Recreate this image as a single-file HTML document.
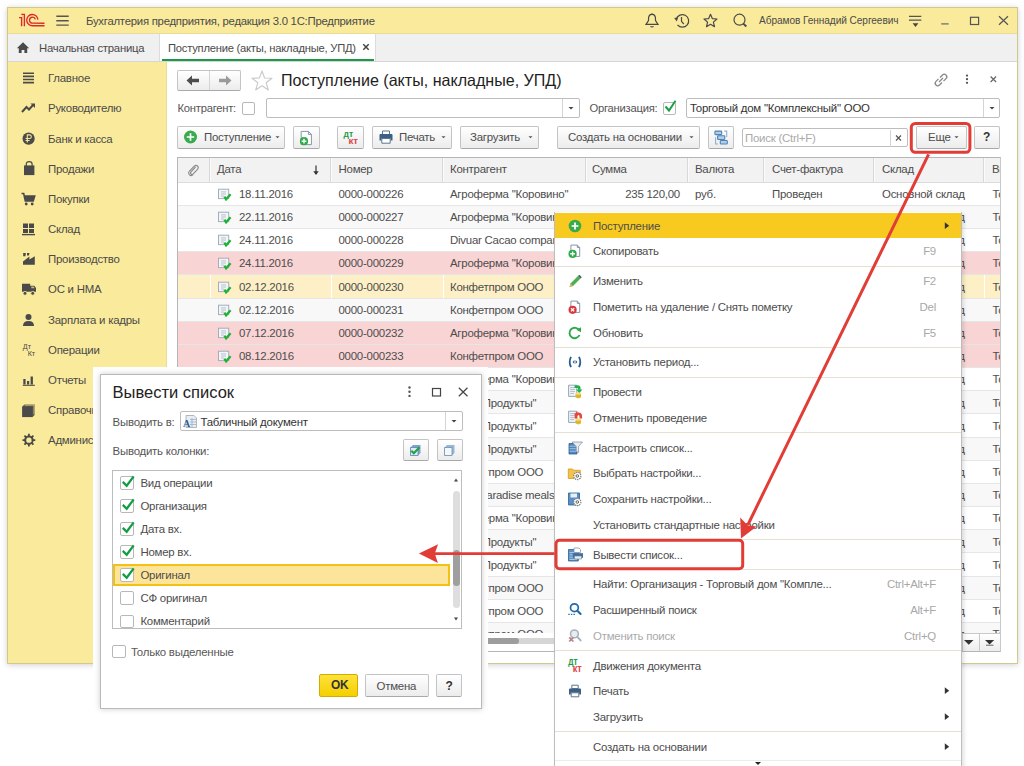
<!DOCTYPE html><html><head><meta charset="utf-8"><style>
html,body{margin:0;padding:0;}
body{width:1024px;height:766px;overflow:hidden;position:relative;background:#fff;font-family:"Liberation Sans", sans-serif;}
div{box-sizing:border-box;}
.btn{position:absolute;box-sizing:border-box;border:1px solid #c4c4c4;border-bottom-color:#a9a9a9;border-radius:2px;background:linear-gradient(#ffffff,#ececec);}
.inp{position:absolute;box-sizing:border-box;border:1px solid #bdbdbd;border-radius:2px;background:#fff;}
.cb{position:absolute;box-sizing:border-box;border:1px solid #b8b8b8;border-radius:2px;background:#fff;}
</style></head><body>
<div style="position:absolute;left:7px;top:7px;width:1011px;height:657px;background:#fff;border:1px solid #d3c88c;box-shadow:0 1px 6px rgba(0,0,0,0.18);"></div>
<div style="position:absolute;left:8px;top:8px;width:1009px;height:26px;background:#faea9b;border-bottom:1px solid #eadc98;"></div>
<svg style="position:absolute;left:0px;top:0px;" width="50" height="35" viewBox="0 0 50 35"><g fill="none" stroke="#dc2a2a" stroke-width="1.35" stroke-linecap="butt">
<path d="M21.3 14.4 H24.4 V26.3"/><path d="M19 17.6 H21.6 V26.3"/>
<path d="M37.9 19.6 A5.6 5.6 0 1 0 32.5 25.7 H44.5"/>
<path d="M35.4 19.4 A3 3 0 1 0 32.5 23.2 H44.5"/>
</g><rect x="22.2" y="15" width="1.6" height="11" fill="#eba27f" opacity="0.6"/></svg>
<svg style="position:absolute;left:55px;top:14px;" width="15" height="13" viewBox="0 0 15 13"><g stroke="#555" stroke-width="1.4"><path d="M1.3 2.3H13.7M1.3 6.7H13.7M1.3 11.1H13.7"/></g></svg>
<div style="position:absolute;left:86px;top:14.0px;height:14px;line-height:14px;font-size:11.34px;letter-spacing:-0.24px;color:#4a4a4a;white-space:nowrap;">Бухгалтерия предприятия, редакция 3.0 1С:Предприятие</div>
<svg style="position:absolute;left:644px;top:12px;" width="16" height="17" viewBox="0 0 16 17"><g fill="none" stroke="#4a4a4a" stroke-width="1.2"><path d="M2 12.3 L4.5 8.5 L4.6 5.4 Q5 2.6 7.5 2.3 L8.5 2.3 Q11 2.6 11.4 5.4 L11.5 8.5 L14 12.3 Z"/></g><path d="M6 14.2 H10 Q9.5 15.6 8 15.6 Q6.5 15.6 6 14.2Z" fill="#4a4a4a"/><path d="M7 2.5 L8 1 L9 2.5Z" fill="#4a4a4a"/></svg>
<svg style="position:absolute;left:673px;top:12px;" width="18" height="18" viewBox="0 0 18 18"><g fill="none" stroke="#4a4a4a" stroke-width="1.2"><path d="M3.3 7.2 A6.3 6.3 0 1 1 4.5 12.9"/><path d="M8.5 5 L8.5 9.3 L10.8 12"/></g><path d="M1.2 6 L5.2 5.3 L3.8 9.5Z" fill="#4a4a4a"/></svg>
<svg style="position:absolute;left:703px;top:13px;" width="16" height="16" viewBox="0 0 16 16"><path d="M7.5 1.3 L9.3 5.6 L14 6 L10.4 9.1 L11.5 13.7 L7.5 11.3 L3.5 13.7 L4.6 9.1 L1 6 L5.7 5.6Z" fill="none" stroke="#4a4a4a" stroke-width="1.2" stroke-linejoin="round"/></svg>
<svg style="position:absolute;left:732px;top:12px;" width="17" height="17" viewBox="0 0 17 17"><circle cx="7.5" cy="7.7" r="5.5" fill="none" stroke="#4a4a4a" stroke-width="1.2"/><path d="M11.3 11.6 L14.3 14.5" stroke="#4a4a4a" stroke-width="2"/></svg>
<div style="position:absolute;left:759px;top:13.7px;height:13px;line-height:13px;font-size:10.1px;color:#4a4a4a;white-space:nowrap;letter-spacing:-0.06px;">Абрамов Геннадий Сергеевич</div>
<svg style="position:absolute;left:907px;top:13px;" width="17" height="16" viewBox="0 0 17 16"><g stroke="#555" stroke-width="1.2"><path d="M2 3.3H14.3M2 7.2H14.3"/></g><path d="M5.6 10.2 L11.4 10.2 L8.5 13.9Z" fill="#444"/></svg>
<svg style="position:absolute;left:938px;top:13px;" width="14" height="14" viewBox="0 0 14 14"><path d="M3.2 10.9 H10.7" stroke="#666" stroke-width="1.2"/></svg>
<svg style="position:absolute;left:967px;top:13px;" width="14" height="14" viewBox="0 0 14 14"><rect x="3.5" y="4.3" width="8.1" height="7.2" fill="none" stroke="#555" stroke-width="1.2"/></svg>
<svg style="position:absolute;left:996px;top:13px;" width="15" height="15" viewBox="0 0 15 15"><path d="M3 3.3 L12 11.8 M12 3.3 L3 11.8" stroke="#555" stroke-width="1.2"/></svg>
<div style="position:absolute;left:8px;top:34px;width:1009px;height:28px;background:#f0f0f0;border-bottom:1px solid #d6d6d6;"></div>
<svg style="position:absolute;left:15px;top:40px;" width="16" height="16" viewBox="0 0 16 16"><path d="M8 2.2 L14.2 8.2 L12.2 8.2 L12.2 13 L9.4 13 L9.4 10 L6.6 10 L6.6 13 L3.8 13 L3.8 8.2 L1.8 8.2Z" fill="#4a4a4a"/></svg>
<div style="position:absolute;left:39px;top:40.5px;height:14px;line-height:14px;font-size:11.34px;letter-spacing:-0.24px;color:#4a4a4a;white-space:nowrap;">Начальная страница</div>
<div style="position:absolute;left:159px;top:34px;width:1px;height:27px;background:#dcdcdc;"></div>
<div style="position:absolute;left:160px;top:34px;width:215px;height:27px;background:#fff;"></div>
<div style="position:absolute;left:375px;top:34px;width:1px;height:27px;background:#dcdcdc;"></div>
<div style="position:absolute;left:161.5px;top:58.5px;width:212px;height:2px;background:#1a9a46;"></div>
<div style="position:absolute;left:168px;top:40.5px;height:14px;line-height:14px;font-size:11.23px;letter-spacing:-0.24px;color:#4a4a4a;white-space:nowrap;">Поступление (акты, накладные, УПД)</div>
<svg style="position:absolute;left:361px;top:42px;" width="10" height="10" viewBox="0 0 10 10"><path d="M2.3 2.3 L7.7 7.7 M7.7 2.3 L2.3 7.7" stroke="#444" stroke-width="1.5"/></svg>
<div style="position:absolute;left:8px;top:62px;width:159px;height:601px;background:#faea9b;border-right:1px solid #e9dc93;"></div>
<div style="position:absolute;left:48px;top:71.3px;height:14px;line-height:14px;font-size:11.44px;letter-spacing:-0.24px;color:#4a4a4a;white-space:nowrap;">Главное</div>
<div style="position:absolute;left:48px;top:101.44999999999999px;height:14px;line-height:14px;font-size:11.44px;letter-spacing:-0.24px;color:#4a4a4a;white-space:nowrap;">Руководителю</div>
<div style="position:absolute;left:48px;top:131.6px;height:14px;line-height:14px;font-size:11.44px;letter-spacing:-0.24px;color:#4a4a4a;white-space:nowrap;">Банк и касса</div>
<div style="position:absolute;left:48px;top:161.75px;height:14px;line-height:14px;font-size:11.44px;letter-spacing:-0.24px;color:#4a4a4a;white-space:nowrap;">Продажи</div>
<div style="position:absolute;left:48px;top:191.89999999999998px;height:14px;line-height:14px;font-size:11.44px;letter-spacing:-0.24px;color:#4a4a4a;white-space:nowrap;">Покупки</div>
<div style="position:absolute;left:48px;top:222.05px;height:14px;line-height:14px;font-size:11.44px;letter-spacing:-0.24px;color:#4a4a4a;white-space:nowrap;">Склад</div>
<div style="position:absolute;left:48px;top:252.2px;height:14px;line-height:14px;font-size:11.44px;letter-spacing:-0.24px;color:#4a4a4a;white-space:nowrap;">Производство</div>
<div style="position:absolute;left:48px;top:282.34999999999997px;height:14px;line-height:14px;font-size:11.44px;letter-spacing:-0.24px;color:#4a4a4a;white-space:nowrap;">ОС и НМА</div>
<div style="position:absolute;left:48px;top:312.5px;height:14px;line-height:14px;font-size:11.44px;letter-spacing:-0.24px;color:#4a4a4a;white-space:nowrap;">Зарплата и кадры</div>
<div style="position:absolute;left:48px;top:342.65px;height:14px;line-height:14px;font-size:11.44px;letter-spacing:-0.24px;color:#4a4a4a;white-space:nowrap;">Операции</div>
<div style="position:absolute;left:48px;top:372.8px;height:14px;line-height:14px;font-size:11.44px;letter-spacing:-0.24px;color:#4a4a4a;white-space:nowrap;">Отчеты</div>
<div style="position:absolute;left:48px;top:402.95px;height:14px;line-height:14px;font-size:11.44px;letter-spacing:-0.24px;color:#4a4a4a;white-space:nowrap;">Справочники</div>
<div style="position:absolute;left:48px;top:433.09999999999997px;height:14px;line-height:14px;font-size:11.44px;letter-spacing:-0.24px;color:#4a4a4a;white-space:nowrap;">Администрирование</div>
<svg style="position:absolute;left:20px;top:70.3px;" width="17" height="16" viewBox="0 0 17 16"><g stroke="#4a4a4a" stroke-width="1.6"><path d="M3 3.3H14M3 6.4H14M3 9.5H14M3 12.6H14"/></g></svg>
<svg style="position:absolute;left:20px;top:100.44999999999999px;" width="17" height="16" viewBox="0 0 17 16"><path d="M2 12 L6.5 7 L9 9.5 L13.5 4.5" fill="none" stroke="#4a4a4a" stroke-width="2"/><path d="M10.5 3.5 L15 3.5 L15 8Z" fill="#4a4a4a"/></svg>
<svg style="position:absolute;left:20px;top:130.6px;" width="17" height="16" viewBox="0 0 17 16"><circle cx="8.6" cy="7.6" r="6.1" fill="#4a4a4a"/><path d="M7.3 11.6 V3.9 H9.4 Q11.3 3.9 11.3 5.7 Q11.3 7.5 9.4 7.5 H5.6 M5.6 9.5 H9.6" fill="none" stroke="#faea9b" stroke-width="1.1"/></svg>
<svg style="position:absolute;left:20px;top:160.75px;" width="17" height="16" viewBox="0 0 17 16"><path d="M4 4.4 H14.4 V14.1 H4Z" fill="#4a4a4a"/><path d="M6.3 5.5 V3 Q6.3 0.7 9.2 0.7 Q12.1 0.7 12.1 3 V5.5" fill="none" stroke="#4a4a4a" stroke-width="1.2"/></svg>
<svg style="position:absolute;left:20px;top:190.89999999999998px;" width="17" height="16" viewBox="0 0 17 16"><path d="M1.5 2.5 H3.7 L5.3 10 H13.2 L14.7 5 H4.5" fill="none" stroke="#4a4a4a" stroke-width="1.6"/><path d="M4.5 5 H14.7 L13.2 10 H5.3Z" fill="#4a4a4a"/><circle cx="6.2" cy="13" r="1.4" fill="#4a4a4a"/><circle cx="12.2" cy="13" r="1.4" fill="#4a4a4a"/></svg>
<svg style="position:absolute;left:20px;top:221.05px;" width="17" height="16" viewBox="0 0 17 16"><path d="M3 2.5 H8 V7 H3Z M9 2.5 H14 V7 H9Z M3 8 H8 V12 H3Z M9 8 H14 V12 H9Z" fill="#4a4a4a"/><path d="M2 13.6 H15" stroke="#4a4a4a" stroke-width="1.4"/></svg>
<svg style="position:absolute;left:20px;top:251.2px;" width="17" height="16" viewBox="0 0 17 16"><path d="M3.2 2 H5.9 L5.4 5.2 H3.2Z M7 2 H9.5 L8.9 4.6 H7Z" fill="#4a4a4a"/><path d="M3 10.6 L9.4 5.6 V8.6 L14.8 5.3 V13.8 H3Z" fill="#4a4a4a"/></svg>
<svg style="position:absolute;left:20px;top:281.34999999999997px;" width="17" height="16" viewBox="0 0 17 16"><path d="M2 2.7 H10.2 V10.7 H2Z M10.2 4.7 H14.3 L16 7 V10.7 H10.2Z" fill="#4a4a4a"/><path d="M11.3 5.6 H13.6 L14.7 7.2 H11.3Z" fill="#faea9b" opacity="0.7"/><circle cx="5" cy="12.3" r="1.9" fill="#4a4a4a" stroke="#faea9b" stroke-width="0.8"/><circle cx="12.7" cy="12.3" r="1.9" fill="#4a4a4a" stroke="#faea9b" stroke-width="0.8"/></svg>
<svg style="position:absolute;left:20px;top:311.5px;" width="17" height="16" viewBox="0 0 17 16"><circle cx="8.5" cy="5" r="3" fill="#4a4a4a"/><path d="M3 14 Q3 9 8.5 9 Q14 9 14 14Z" fill="#4a4a4a"/></svg>
<svg style="position:absolute;left:20px;top:341.65px;" width="17" height="16" viewBox="0 0 17 16"><text x="2.8" y="7.4" font-size="7.2" font-family="Liberation Sans" fill="#4a4a4a">Дт</text><text x="7.7" y="14.2" font-size="7.2" font-family="Liberation Sans" fill="#4a4a4a">Кт</text></svg>
<svg style="position:absolute;left:20px;top:371.8px;" width="17" height="16" viewBox="0 0 17 16"><path d="M3.3 7 H5.6 V12.6 H3.3Z M7 9 H9.2 V12.6 H7Z M10.6 4.5 H12.9 V12.6 H10.6Z" fill="#4a4a4a"/><path d="M2.8 13.3 H14.8" stroke="#4a4a4a" stroke-width="1.1"/></svg>
<svg style="position:absolute;left:20px;top:401.95px;" width="17" height="16" viewBox="0 0 17 16"><path d="M2.3 4.6 L4.5 2.4 H14.7 V12.9 L12.5 15.1 H2.3Z" fill="#5f5b4a"/><path d="M2.3 4.6 H12.5 V15.1 H2.3Z" fill="#4a4a4a"/><path d="M4.8 3.2 H14 V12.4" fill="none" stroke="#faea9b" stroke-width="0.6"/></svg>
<svg style="position:absolute;left:20px;top:432.09999999999997px;" width="17" height="16" viewBox="0 0 17 16"><circle cx="8.9" cy="8.2" r="3.9" fill="none" stroke="#4a4a4a" stroke-width="1.8"/><path d="M8.9 1.8V14.6M2.5 8.2H15.3M4.4 3.7L13.4 12.7M13.4 3.7L4.4 12.7" stroke="#4a4a4a" stroke-width="1.8"/><circle cx="8.9" cy="8.2" r="2.6" fill="#faea9b"/></svg>
<div class="btn" style="left:177px;top:69.5px;width:64px;height:21px;"></div>
<div style="position:absolute;left:209px;top:70.5px;width:1px;height:19px;background:#d4d4d4;"></div>
<svg style="position:absolute;left:185px;top:74px;" width="16" height="13" viewBox="0 0 16 13"><path d="M1.5 6.5 L7 1.5 L7 4.8 L14 4.8 L14 8.2 L7 8.2 L7 11.5Z" fill="#4d4d4d"/></svg>
<svg style="position:absolute;left:217px;top:74px;" width="16" height="13" viewBox="0 0 16 13"><path d="M14.5 6.5 L9 1.5 L9 4.8 L2 4.8 L2 8.2 L9 8.2 L9 11.5Z" fill="#9a9a9a"/></svg>
<svg style="position:absolute;left:250px;top:69px;" width="24" height="23" viewBox="0 0 24 23"><path d="M12 2 L14.6 9 L22 9.2 L16.2 13.8 L18.3 21 L12 16.8 L5.7 21 L7.8 13.8 L2 9.2 L9.4 9Z" fill="none" stroke="#c9c9c9" stroke-width="1.1" stroke-linejoin="round"/></svg>
<div style="position:absolute;left:281px;top:69.5px;height:21px;line-height:21px;font-size:16.07px;color:#1e1e1e;white-space:nowrap;">Поступление (акты, накладные, УПД)</div>
<svg style="position:absolute;left:931px;top:70px;" width="20" height="20" viewBox="0 0 20 20"><g fill="none" stroke="#888" stroke-width="1.3"><path d="M9 7.5 L11.5 5 Q13.3 3.2 15 5 Q16.8 6.8 15 8.6 L12.5 11.1"/><path d="M11 12.5 L8.5 15 Q6.7 16.8 5 15 Q3.2 13.2 5 11.4 L7.5 8.9"/><path d="M8 12 L12 8"/></g></svg>
<svg style="position:absolute;left:963px;top:73px;" width="8" height="14" viewBox="0 0 8 14"><circle cx="4" cy="2.6" r="1.15" fill="#555"/><circle cx="4" cy="6.2" r="1.15" fill="#555"/><circle cx="4" cy="9.8" r="1.15" fill="#555"/></svg>
<svg style="position:absolute;left:987px;top:74px;" width="12" height="12" viewBox="0 0 12 12"><path d="M3.6 2.5 L9.1 8 M9.1 2.5 L3.6 8" stroke="#666" stroke-width="1.2"/></svg>
<div style="position:absolute;left:177.5px;top:101.0px;height:14px;line-height:14px;font-size:11.23px;letter-spacing:-0.24px;color:#555;white-space:nowrap;">Контрагент:</div>
<div class="cb" style="left:241.8px;top:102px;width:13px;height:13px;"></div>
<div class="inp" style="left:265.5px;top:98px;width:314px;height:20px;"></div>
<div style="position:absolute;left:561.5px;top:99px;width:1px;height:18px;background:#d4d4d4;"></div>
<svg style="position:absolute;left:566px;top:104px;" width="10" height="8" viewBox="0 0 10 8"><path d="M2.5 3 L7.5 3 L5 5.5Z" fill="#444"/></svg>
<div style="position:absolute;left:589.5px;top:101.0px;height:14px;line-height:14px;font-size:11.23px;letter-spacing:-0.24px;color:#555;white-space:nowrap;">Организация:</div>
<div class="cb" style="left:663.4px;top:102px;width:13px;height:13px;"></div>
<svg style="position:absolute;left:661px;top:97px;" width="18" height="18" viewBox="0 0 18 18"><path d="M4.5 9.5 L8 13.5 L14.5 3.8" fill="none" stroke="#1c9f45" stroke-width="2"/></svg>
<div class="inp" style="left:686px;top:98px;width:314px;height:20px;"></div>
<div style="position:absolute;left:982.5px;top:99px;width:1px;height:18px;background:#d4d4d4;"></div>
<svg style="position:absolute;left:987px;top:104px;" width="10" height="8" viewBox="0 0 10 8"><path d="M2.5 3 L7.5 3 L5 5.5Z" fill="#444"/></svg>
<div style="position:absolute;left:690px;top:101.0px;height:14px;line-height:14px;font-size:11.44px;letter-spacing:-0.24px;color:#333;white-space:nowrap;">Торговый дом "Комплексный" ООО</div>
<div class="btn" style="left:177px;top:125.6px;width:108px;height:23px;"></div>
<svg style="position:absolute;left:182px;top:127px;" width="18" height="18" viewBox="0 0 18 18"><circle cx="8.5" cy="10" r="6.5" fill="#3aaa4f"/><path d="M8.5 6.3V13.7M4.8 10H12.2" stroke="#fff" stroke-width="1.7"/></svg>
<div style="position:absolute;left:204px;top:130.1px;height:14px;line-height:14px;font-size:11.44px;letter-spacing:-0.24px;color:#4d4d4d;white-space:nowrap;">Поступление</div>
<svg style="position:absolute;left:274px;top:133px;" width="8" height="8" viewBox="0 0 8 8"><path d="M1.5 3.2H5.5L3.5 5.2Z" fill="#555"/></svg>
<div class="btn" style="left:293px;top:125.6px;width:27px;height:23px;"></div>
<svg style="position:absolute;left:297px;top:128px;" width="20" height="19" viewBox="0 0 20 19"><path d="M4.2 3.4 H11.4 L14.4 6.4 V16.6 H4.2Z" fill="#fff" stroke="#8896a6" stroke-width="1"/><path d="M11.4 3.4V6.4H14.4" fill="none" stroke="#8896a6" stroke-width="1"/><circle cx="7" cy="13.2" r="4.1" fill="#2eaa48"/><path d="M7 10.8V15.6M4.6 13.2H9.4" stroke="#fff" stroke-width="1.4"/></svg>
<div class="btn" style="left:337px;top:125.6px;width:27px;height:23px;"></div>
<svg style="position:absolute;left:340px;top:128px;" width="22" height="18" viewBox="0 0 22 18"><text x="3.5" y="9.3" font-size="9" font-weight="bold" font-family="Liberation Sans" fill="#1f9a45" textLength="9.6" lengthAdjust="spacingAndGlyphs">дт</text><text x="8.5" y="15.8" font-size="9" font-weight="bold" font-family="Liberation Sans" fill="#e04545" textLength="9.6" lengthAdjust="spacingAndGlyphs">кт</text></svg>
<div class="btn" style="left:372px;top:125.6px;width:80px;height:23px;"></div>
<svg style="position:absolute;left:377px;top:128px;" width="18" height="18" viewBox="0 0 18 18"><path d="M5.5 3 H12.5 V6.5 H5.5Z" fill="#fff" stroke="#5c7590" stroke-width="1"/><path d="M2.5 7 Q2.5 6 3.5 6 H14.5 Q15.5 6 15.5 7 V12.5 H13.5 V10.5 H4.5 V12.5 H2.5Z" fill="#3d5f85"/><path d="M4.8 10.5 H13.2 V15.2 H4.8Z" fill="#fff" stroke="#5c7590" stroke-width="1"/></svg>
<div style="position:absolute;left:399px;top:130.1px;height:14px;line-height:14px;font-size:11.44px;letter-spacing:-0.24px;color:#4d4d4d;white-space:nowrap;">Печать</div>
<svg style="position:absolute;left:440px;top:133px;" width="8" height="8" viewBox="0 0 8 8"><path d="M1.5 3.2H5.5L3.5 5.2Z" fill="#555"/></svg>
<div class="btn" style="left:460px;top:125.6px;width:79px;height:23px;"></div>
<div style="position:absolute;left:470px;top:130.1px;height:14px;line-height:14px;font-size:11.44px;letter-spacing:-0.24px;color:#4d4d4d;white-space:nowrap;">Загрузить</div>
<svg style="position:absolute;left:527px;top:133px;" width="8" height="8" viewBox="0 0 8 8"><path d="M1.5 3.2H5.5L3.5 5.2Z" fill="#555"/></svg>
<div class="btn" style="left:556.5px;top:125.6px;width:143px;height:23px;"></div>
<div style="position:absolute;left:568px;top:130.1px;height:14px;line-height:14px;font-size:11.44px;letter-spacing:-0.24px;color:#4d4d4d;white-space:nowrap;">Создать на основании</div>
<svg style="position:absolute;left:688px;top:133px;" width="8" height="8" viewBox="0 0 8 8"><path d="M1.5 3.2H5.5L3.5 5.2Z" fill="#555"/></svg>
<div class="btn" style="left:708px;top:125.6px;width:26px;height:23px;"></div>
<svg style="position:absolute;left:708px;top:125px;" width="26" height="22" viewBox="0 0 26 22"><g stroke="#4f83b5" stroke-width="1.1" fill="#b3cde6"><rect x="6.9" y="6.1" width="6.8" height="3.5" rx="0.8"/><rect x="9.6" y="10.7" width="7.2" height="3.8" rx="0.8"/><rect x="12.3" y="15.5" width="7" height="3.5" rx="0.8"/></g><path d="M7.6 12.3 V19 H10 M16.3 6.1 H18.7 V12" fill="none" stroke="#8fb2d3" stroke-width="1.1"/></svg>
<div class="inp" style="left:742px;top:128.4px;width:165.5px;height:19px;"></div>
<div style="position:absolute;left:889.5px;top:129.5px;width:1px;height:17px;background:#d4d4d4;"></div>
<div style="position:absolute;left:745px;top:131.0px;height:14px;line-height:14px;font-size:11.44px;letter-spacing:-0.24px;color:#aaa;white-space:nowrap;">Поиск (Ctrl+F)</div>
<svg style="position:absolute;left:893px;top:133px;" width="12" height="10" viewBox="0 0 12 10"><path d="M3 2.5 L8 7.5 M8 2.5 L3 7.5" stroke="#555" stroke-width="1.2"/></svg>
<div class="btn" style="left:915.5px;top:125.5px;width:51px;height:23.4px;"></div>
<div style="position:absolute;left:928px;top:130.0px;height:14px;line-height:14px;font-size:11.44px;letter-spacing:-0.24px;color:#4d4d4d;white-space:nowrap;">Еще</div>
<svg style="position:absolute;left:953px;top:133px;" width="8" height="8" viewBox="0 0 8 8"><path d="M1.5 3.2H5.5L3.5 5.2Z" fill="#555"/></svg>
<div class="btn" style="left:974px;top:125.5px;width:26px;height:23.4px;"></div>
<div style="position:absolute;left:983px;top:129.0px;height:16px;line-height:16px;font-size:12px;color:#333;white-space:nowrap;font-weight:bold;">?</div>
<div style="position:absolute;left:177.3px;top:157.3px;width:823.7px;height:494.90000000000003px;border:1px solid #b5b5b5;border-right-color:#c8c8c8;background:#fff;overflow:hidden;">
<div style="position:absolute;left:0.00px;top:0.00px;width:900.00px;height:24.40px;background:#f2f2f2;border-bottom:1px solid #dcdcdc;"></div>
<div style="position:absolute;left:30.30px;top:0.00px;width:1.00px;height:23.40px;background:#d8d8d8;box-shadow:1px 0 0 #fbfbfb;"></div>
<div style="position:absolute;left:151.30px;top:0.00px;width:1.00px;height:23.40px;background:#d8d8d8;box-shadow:1px 0 0 #fbfbfb;"></div>
<div style="position:absolute;left:263.30px;top:0.00px;width:1.00px;height:23.40px;background:#d8d8d8;box-shadow:1px 0 0 #fbfbfb;"></div>
<div style="position:absolute;left:406.30px;top:0.00px;width:1.00px;height:23.40px;background:#d8d8d8;box-shadow:1px 0 0 #fbfbfb;"></div>
<div style="position:absolute;left:508.70px;top:0.00px;width:1.00px;height:23.40px;background:#d8d8d8;box-shadow:1px 0 0 #fbfbfb;"></div>
<div style="position:absolute;left:585.10px;top:0.00px;width:1.00px;height:23.40px;background:#d8d8d8;box-shadow:1px 0 0 #fbfbfb;"></div>
<div style="position:absolute;left:695.20px;top:0.00px;width:1.00px;height:23.40px;background:#d8d8d8;box-shadow:1px 0 0 #fbfbfb;"></div>
<div style="position:absolute;left:805.20px;top:0.00px;width:1.00px;height:23.40px;background:#d8d8d8;box-shadow:1px 0 0 #fbfbfb;"></div>
<div style="position:absolute;left:7.70px;top:4.70px;width:14.00px;height:14.00px;"><svg width="14" height="14" viewBox="0 0 14 14" style="position:absolute;left:0;top:0"><path d="M9.5 4 L5 8.8 Q4 10 5 11 Q6 12 7.2 10.8 L11.5 6.3 Q13 4.5 11.5 3 Q10 1.6 8.2 3.2 L3.5 8 Q1.8 10 3.5 11.8 Q5.2 13.4 7.2 11.6" fill="none" stroke="#888" stroke-width="1.1"/></svg></div>
<div style="position:absolute;left:38.70px;top:2.90px;height:16px;line-height:16px;font-size:11.44px;letter-spacing:-0.24px;color:#4d4d4d;white-space:nowrap;">Дата</div>
<div style="position:absolute;left:160.20px;top:2.90px;height:16px;line-height:16px;font-size:11.44px;letter-spacing:-0.24px;color:#4d4d4d;white-space:nowrap;">Номер</div>
<div style="position:absolute;left:271.70px;top:2.90px;height:16px;line-height:16px;font-size:11.44px;letter-spacing:-0.24px;color:#4d4d4d;white-space:nowrap;">Контрагент</div>
<div style="position:absolute;left:413.70px;top:2.90px;height:16px;line-height:16px;font-size:11.44px;letter-spacing:-0.24px;color:#4d4d4d;white-space:nowrap;">Сумма</div>
<div style="position:absolute;left:516.70px;top:2.90px;height:16px;line-height:16px;font-size:11.44px;letter-spacing:-0.24px;color:#4d4d4d;white-space:nowrap;">Валюта</div>
<div style="position:absolute;left:593.70px;top:2.90px;height:16px;line-height:16px;font-size:11.44px;letter-spacing:-0.24px;color:#4d4d4d;white-space:nowrap;">Счет-фактура</div>
<div style="position:absolute;left:703.70px;top:2.90px;height:16px;line-height:16px;font-size:11.44px;letter-spacing:-0.24px;color:#4d4d4d;white-space:nowrap;">Склад</div>
<div style="position:absolute;left:813.70px;top:2.90px;height:16px;line-height:16px;font-size:11.44px;letter-spacing:-0.24px;color:#4d4d4d;white-space:nowrap;">Вид операции</div>
<div style="position:absolute;left:132.70px;top:4.70px;width:10.00px;height:14.00px;"><svg width="10" height="14" viewBox="0 0 10 14" style="position:absolute;left:0;top:0"><path d="M5 2.5V11" stroke="#333" stroke-width="1.2"/><path d="M2.3 8.3 L5 12 L7.7 8.3Z" fill="#333"/></svg></div>
<div style="position:absolute;left:0.00px;top:24.40px;width:900.00px;height:23.17px;background:#ffffff;border-bottom:1px solid #e6e6e6;"></div>
<div style="position:absolute;left:38.70px;top:29.68px;width:16.00px;height:14.00px;"><svg width="16" height="14" viewBox="0 0 16 14" style="position:absolute;left:0;top:0"><rect x="1.5" y="1.2" width="10.2" height="9.4" fill="#f3f5f8" stroke="#a3aebb" stroke-width="1"/><path d="M4 3.9H9M4 6H9M4 8.1H7" fill="none" stroke="#b3bcc7" stroke-width="0.9"/><path d="M7.4 8.6 L9.1 11.3 L13.6 6.2" fill="none" stroke="#1fb137" stroke-width="2.2"/></svg></div>
<div style="position:absolute;left:60.70px;top:27.68px;height:16px;line-height:16px;font-size:11.44px;letter-spacing:-0.24px;color:#4d4d4d;white-space:nowrap;">18.11.2016</div>
<div style="position:absolute;left:160.20px;top:27.68px;height:16px;line-height:16px;font-size:11.44px;letter-spacing:-0.24px;color:#4d4d4d;white-space:nowrap;">0000-000226</div>
<div style="position:absolute;left:271.70px;top:27.68px;height:16px;line-height:16px;font-size:11.44px;letter-spacing:-0.24px;color:#4d4d4d;white-space:nowrap;">Агроферма "Коровино"</div>
<div style="position:absolute;left:407.70px;width:94px;top:27.68px;height:16px;line-height:16px;font-size:11.44px;letter-spacing:-0.24px;color:#4d4d4d;text-align:right;white-space:nowrap;">235 120,00</div>
<div style="position:absolute;left:516.70px;top:27.68px;height:16px;line-height:16px;font-size:11.44px;letter-spacing:-0.24px;color:#4d4d4d;white-space:nowrap;">руб.</div>
<div style="position:absolute;left:593.70px;top:27.68px;height:16px;line-height:16px;font-size:11.44px;letter-spacing:-0.24px;color:#4d4d4d;white-space:nowrap;">Проведен</div>
<div style="position:absolute;left:703.70px;top:27.68px;height:16px;line-height:16px;font-size:11.44px;letter-spacing:-0.24px;color:#4d4d4d;white-space:nowrap;">Основной склад</div>
<div style="position:absolute;left:814.20px;top:27.68px;height:16px;line-height:16px;font-size:11.44px;letter-spacing:-0.24px;color:#4d4d4d;white-space:nowrap;">Товары</div>
<div style="position:absolute;left:0.00px;top:47.57px;width:900.00px;height:23.17px;background:#f8f8f8;border-bottom:1px solid #e6e6e6;"></div>
<div style="position:absolute;left:38.70px;top:52.85px;width:16.00px;height:14.00px;"><svg width="16" height="14" viewBox="0 0 16 14" style="position:absolute;left:0;top:0"><rect x="1.5" y="1.2" width="10.2" height="9.4" fill="#f3f5f8" stroke="#a3aebb" stroke-width="1"/><path d="M4 3.9H9M4 6H9M4 8.1H7" fill="none" stroke="#b3bcc7" stroke-width="0.9"/><path d="M7.4 8.6 L9.1 11.3 L13.6 6.2" fill="none" stroke="#1fb137" stroke-width="2.2"/></svg></div>
<div style="position:absolute;left:60.70px;top:50.85px;height:16px;line-height:16px;font-size:11.44px;letter-spacing:-0.24px;color:#4d4d4d;white-space:nowrap;">22.11.2016</div>
<div style="position:absolute;left:160.20px;top:50.85px;height:16px;line-height:16px;font-size:11.44px;letter-spacing:-0.24px;color:#4d4d4d;white-space:nowrap;">0000-000227</div>
<div style="position:absolute;left:271.70px;top:50.85px;height:16px;line-height:16px;font-size:11.44px;letter-spacing:-0.24px;color:#4d4d4d;white-space:nowrap;">Агроферма "Коровино"</div>
<div style="position:absolute;left:703.70px;top:50.85px;height:16px;line-height:16px;font-size:11.44px;letter-spacing:-0.24px;color:#4d4d4d;white-space:nowrap;">Основной склад</div>
<div style="position:absolute;left:814.20px;top:50.85px;height:16px;line-height:16px;font-size:11.44px;letter-spacing:-0.24px;color:#4d4d4d;white-space:nowrap;">Товары</div>
<div style="position:absolute;left:0.00px;top:70.74px;width:900.00px;height:23.17px;background:#ffffff;border-bottom:1px solid #e6e6e6;"></div>
<div style="position:absolute;left:38.70px;top:76.02px;width:16.00px;height:14.00px;"><svg width="16" height="14" viewBox="0 0 16 14" style="position:absolute;left:0;top:0"><rect x="1.5" y="1.2" width="10.2" height="9.4" fill="#f3f5f8" stroke="#a3aebb" stroke-width="1"/><path d="M4 3.9H9M4 6H9M4 8.1H7" fill="none" stroke="#b3bcc7" stroke-width="0.9"/><path d="M7.4 8.6 L9.1 11.3 L13.6 6.2" fill="none" stroke="#1fb137" stroke-width="2.2"/></svg></div>
<div style="position:absolute;left:60.70px;top:74.02px;height:16px;line-height:16px;font-size:11.44px;letter-spacing:-0.24px;color:#4d4d4d;white-space:nowrap;">24.11.2016</div>
<div style="position:absolute;left:160.20px;top:74.02px;height:16px;line-height:16px;font-size:11.44px;letter-spacing:-0.24px;color:#4d4d4d;white-space:nowrap;">0000-000228</div>
<div style="position:absolute;left:271.70px;top:74.02px;height:16px;line-height:16px;font-size:11.44px;letter-spacing:-0.24px;color:#4d4d4d;white-space:nowrap;">Divuar Cacao company</div>
<div style="position:absolute;left:703.70px;top:74.02px;height:16px;line-height:16px;font-size:11.44px;letter-spacing:-0.24px;color:#4d4d4d;white-space:nowrap;">Основной склад</div>
<div style="position:absolute;left:814.20px;top:74.02px;height:16px;line-height:16px;font-size:11.44px;letter-spacing:-0.24px;color:#4d4d4d;white-space:nowrap;">Товары</div>
<div style="position:absolute;left:0.00px;top:93.91px;width:900.00px;height:23.17px;background:#f9d4d4;border-bottom:1px solid #e6e6e6;"></div>
<div style="position:absolute;left:38.70px;top:99.19px;width:16.00px;height:14.00px;"><svg width="16" height="14" viewBox="0 0 16 14" style="position:absolute;left:0;top:0"><rect x="1.5" y="1.2" width="10.2" height="9.4" fill="#f3f5f8" stroke="#a3aebb" stroke-width="1"/><path d="M4 3.9H9M4 6H9M4 8.1H7" fill="none" stroke="#b3bcc7" stroke-width="0.9"/><path d="M7.4 8.6 L9.1 11.3 L13.6 6.2" fill="none" stroke="#1fb137" stroke-width="2.2"/></svg></div>
<div style="position:absolute;left:60.70px;top:97.19px;height:16px;line-height:16px;font-size:11.44px;letter-spacing:-0.24px;color:#4d4d4d;white-space:nowrap;">24.11.2016</div>
<div style="position:absolute;left:160.20px;top:97.19px;height:16px;line-height:16px;font-size:11.44px;letter-spacing:-0.24px;color:#4d4d4d;white-space:nowrap;">0000-000229</div>
<div style="position:absolute;left:271.70px;top:97.19px;height:16px;line-height:16px;font-size:11.44px;letter-spacing:-0.24px;color:#4d4d4d;white-space:nowrap;">Агроферма "Коровино"</div>
<div style="position:absolute;left:703.70px;top:97.19px;height:16px;line-height:16px;font-size:11.44px;letter-spacing:-0.24px;color:#4d4d4d;white-space:nowrap;">Основной склад</div>
<div style="position:absolute;left:814.20px;top:97.19px;height:16px;line-height:16px;font-size:11.44px;letter-spacing:-0.24px;color:#4d4d4d;white-space:nowrap;">Товары</div>
<div style="position:absolute;left:0.00px;top:117.08px;width:900.00px;height:23.17px;background:#fdf0c6;border-bottom:1px solid #e6e6e6;"></div>
<div style="position:absolute;left:31.30px;top:117.08px;width:1.00px;height:22.17px;background:#fff;"></div>
<div style="position:absolute;left:152.30px;top:117.08px;width:1.00px;height:22.17px;background:#fff;"></div>
<div style="position:absolute;left:264.30px;top:117.08px;width:1.00px;height:22.17px;background:#fff;"></div>
<div style="position:absolute;left:407.30px;top:117.08px;width:1.00px;height:22.17px;background:#fff;"></div>
<div style="position:absolute;left:509.70px;top:117.08px;width:1.00px;height:22.17px;background:#fff;"></div>
<div style="position:absolute;left:586.10px;top:117.08px;width:1.00px;height:22.17px;background:#fff;"></div>
<div style="position:absolute;left:696.20px;top:117.08px;width:1.00px;height:22.17px;background:#fff;"></div>
<div style="position:absolute;left:806.20px;top:117.08px;width:1.00px;height:22.17px;background:#fff;"></div>
<div style="position:absolute;left:38.70px;top:122.36px;width:16.00px;height:14.00px;"><svg width="16" height="14" viewBox="0 0 16 14" style="position:absolute;left:0;top:0"><rect x="1.5" y="1.2" width="10.2" height="9.4" fill="#f3f5f8" stroke="#a3aebb" stroke-width="1"/><path d="M4 3.9H9M4 6H9M4 8.1H7" fill="none" stroke="#b3bcc7" stroke-width="0.9"/><path d="M7.4 8.6 L9.1 11.3 L13.6 6.2" fill="none" stroke="#1fb137" stroke-width="2.2"/></svg></div>
<div style="position:absolute;left:60.70px;top:120.36px;height:16px;line-height:16px;font-size:11.44px;letter-spacing:-0.24px;color:#4d4d4d;white-space:nowrap;">02.12.2016</div>
<div style="position:absolute;left:160.20px;top:120.36px;height:16px;line-height:16px;font-size:11.44px;letter-spacing:-0.24px;color:#4d4d4d;white-space:nowrap;">0000-000230</div>
<div style="position:absolute;left:271.70px;top:120.36px;height:16px;line-height:16px;font-size:11.44px;letter-spacing:-0.24px;color:#4d4d4d;white-space:nowrap;">Конфетпром ООО</div>
<div style="position:absolute;left:703.70px;top:120.36px;height:16px;line-height:16px;font-size:11.44px;letter-spacing:-0.24px;color:#4d4d4d;white-space:nowrap;">Основной склад</div>
<div style="position:absolute;left:814.20px;top:120.36px;height:16px;line-height:16px;font-size:11.44px;letter-spacing:-0.24px;color:#4d4d4d;white-space:nowrap;">Товары</div>
<div style="position:absolute;left:0.00px;top:140.25px;width:900.00px;height:23.17px;background:#f8f8f8;border-bottom:1px solid #e6e6e6;"></div>
<div style="position:absolute;left:38.70px;top:145.53px;width:16.00px;height:14.00px;"><svg width="16" height="14" viewBox="0 0 16 14" style="position:absolute;left:0;top:0"><rect x="1.5" y="1.2" width="10.2" height="9.4" fill="#f3f5f8" stroke="#a3aebb" stroke-width="1"/><path d="M4 3.9H9M4 6H9M4 8.1H7" fill="none" stroke="#b3bcc7" stroke-width="0.9"/><path d="M7.4 8.6 L9.1 11.3 L13.6 6.2" fill="none" stroke="#1fb137" stroke-width="2.2"/></svg></div>
<div style="position:absolute;left:60.70px;top:143.53px;height:16px;line-height:16px;font-size:11.44px;letter-spacing:-0.24px;color:#4d4d4d;white-space:nowrap;">02.12.2016</div>
<div style="position:absolute;left:160.20px;top:143.53px;height:16px;line-height:16px;font-size:11.44px;letter-spacing:-0.24px;color:#4d4d4d;white-space:nowrap;">0000-000231</div>
<div style="position:absolute;left:271.70px;top:143.53px;height:16px;line-height:16px;font-size:11.44px;letter-spacing:-0.24px;color:#4d4d4d;white-space:nowrap;">Конфетпром ООО</div>
<div style="position:absolute;left:703.70px;top:143.53px;height:16px;line-height:16px;font-size:11.44px;letter-spacing:-0.24px;color:#4d4d4d;white-space:nowrap;">Основной склад</div>
<div style="position:absolute;left:814.20px;top:143.53px;height:16px;line-height:16px;font-size:11.44px;letter-spacing:-0.24px;color:#4d4d4d;white-space:nowrap;">Товары</div>
<div style="position:absolute;left:0.00px;top:163.42px;width:900.00px;height:23.17px;background:#f9d4d4;border-bottom:1px solid #e6e6e6;"></div>
<div style="position:absolute;left:38.70px;top:168.70px;width:16.00px;height:14.00px;"><svg width="16" height="14" viewBox="0 0 16 14" style="position:absolute;left:0;top:0"><rect x="1.5" y="1.2" width="10.2" height="9.4" fill="#f3f5f8" stroke="#a3aebb" stroke-width="1"/><path d="M4 3.9H9M4 6H9M4 8.1H7" fill="none" stroke="#b3bcc7" stroke-width="0.9"/><path d="M7.4 8.6 L9.1 11.3 L13.6 6.2" fill="none" stroke="#1fb137" stroke-width="2.2"/></svg></div>
<div style="position:absolute;left:60.70px;top:166.70px;height:16px;line-height:16px;font-size:11.44px;letter-spacing:-0.24px;color:#4d4d4d;white-space:nowrap;">07.12.2016</div>
<div style="position:absolute;left:160.20px;top:166.70px;height:16px;line-height:16px;font-size:11.44px;letter-spacing:-0.24px;color:#4d4d4d;white-space:nowrap;">0000-000232</div>
<div style="position:absolute;left:271.70px;top:166.70px;height:16px;line-height:16px;font-size:11.44px;letter-spacing:-0.24px;color:#4d4d4d;white-space:nowrap;">Агроферма "Коровино"</div>
<div style="position:absolute;left:703.70px;top:166.70px;height:16px;line-height:16px;font-size:11.44px;letter-spacing:-0.24px;color:#4d4d4d;white-space:nowrap;">Основной склад</div>
<div style="position:absolute;left:814.20px;top:166.70px;height:16px;line-height:16px;font-size:11.44px;letter-spacing:-0.24px;color:#4d4d4d;white-space:nowrap;">Товары</div>
<div style="position:absolute;left:0.00px;top:186.59px;width:900.00px;height:23.17px;background:#f9d4d4;border-bottom:1px solid #e6e6e6;"></div>
<div style="position:absolute;left:38.70px;top:191.87px;width:16.00px;height:14.00px;"><svg width="16" height="14" viewBox="0 0 16 14" style="position:absolute;left:0;top:0"><rect x="1.5" y="1.2" width="10.2" height="9.4" fill="#f3f5f8" stroke="#a3aebb" stroke-width="1"/><path d="M4 3.9H9M4 6H9M4 8.1H7" fill="none" stroke="#b3bcc7" stroke-width="0.9"/><path d="M7.4 8.6 L9.1 11.3 L13.6 6.2" fill="none" stroke="#1fb137" stroke-width="2.2"/></svg></div>
<div style="position:absolute;left:60.70px;top:189.87px;height:16px;line-height:16px;font-size:11.44px;letter-spacing:-0.24px;color:#4d4d4d;white-space:nowrap;">08.12.2016</div>
<div style="position:absolute;left:160.20px;top:189.87px;height:16px;line-height:16px;font-size:11.44px;letter-spacing:-0.24px;color:#4d4d4d;white-space:nowrap;">0000-000233</div>
<div style="position:absolute;left:271.70px;top:189.87px;height:16px;line-height:16px;font-size:11.44px;letter-spacing:-0.24px;color:#4d4d4d;white-space:nowrap;">Конфетпром ООО</div>
<div style="position:absolute;left:703.70px;top:189.87px;height:16px;line-height:16px;font-size:11.44px;letter-spacing:-0.24px;color:#4d4d4d;white-space:nowrap;">Основной склад</div>
<div style="position:absolute;left:814.20px;top:189.87px;height:16px;line-height:16px;font-size:11.44px;letter-spacing:-0.24px;color:#4d4d4d;white-space:nowrap;">Товары</div>
<div style="position:absolute;left:0.00px;top:209.76px;width:900.00px;height:23.17px;background:#ffffff;border-bottom:1px solid #e6e6e6;"></div>
<div style="position:absolute;left:271.70px;top:213.04px;height:16px;line-height:16px;font-size:11.44px;letter-spacing:-0.24px;color:#4d4d4d;white-space:nowrap;">Агроферма "Коровино"</div>
<div style="position:absolute;left:703.70px;top:213.04px;height:16px;line-height:16px;font-size:11.44px;letter-spacing:-0.24px;color:#4d4d4d;white-space:nowrap;">Основной склад</div>
<div style="position:absolute;left:814.20px;top:213.04px;height:16px;line-height:16px;font-size:11.44px;letter-spacing:-0.24px;color:#4d4d4d;white-space:nowrap;">Товары</div>
<div style="position:absolute;left:0.00px;top:232.93px;width:900.00px;height:23.17px;background:#f8f8f8;border-bottom:1px solid #e6e6e6;"></div>
<div style="position:absolute;left:271.70px;top:236.21px;height:16px;line-height:16px;font-size:11.44px;letter-spacing:-0.24px;color:#4d4d4d;white-space:nowrap;">ООО "Продукты"</div>
<div style="position:absolute;left:703.70px;top:236.21px;height:16px;line-height:16px;font-size:11.44px;letter-spacing:-0.24px;color:#4d4d4d;white-space:nowrap;">Основной склад</div>
<div style="position:absolute;left:814.20px;top:236.21px;height:16px;line-height:16px;font-size:11.44px;letter-spacing:-0.24px;color:#4d4d4d;white-space:nowrap;">Товары</div>
<div style="position:absolute;left:0.00px;top:256.10px;width:900.00px;height:23.17px;background:#ffffff;border-bottom:1px solid #e6e6e6;"></div>
<div style="position:absolute;left:271.70px;top:259.38px;height:16px;line-height:16px;font-size:11.44px;letter-spacing:-0.24px;color:#4d4d4d;white-space:nowrap;">ООО "Продукты"</div>
<div style="position:absolute;left:703.70px;top:259.38px;height:16px;line-height:16px;font-size:11.44px;letter-spacing:-0.24px;color:#4d4d4d;white-space:nowrap;">Основной склад</div>
<div style="position:absolute;left:814.20px;top:259.38px;height:16px;line-height:16px;font-size:11.44px;letter-spacing:-0.24px;color:#4d4d4d;white-space:nowrap;">Товары</div>
<div style="position:absolute;left:0.00px;top:279.27px;width:900.00px;height:23.17px;background:#f8f8f8;border-bottom:1px solid #e6e6e6;"></div>
<div style="position:absolute;left:271.70px;top:282.55px;height:16px;line-height:16px;font-size:11.44px;letter-spacing:-0.24px;color:#4d4d4d;white-space:nowrap;">ООО "Продукты"</div>
<div style="position:absolute;left:703.70px;top:282.55px;height:16px;line-height:16px;font-size:11.44px;letter-spacing:-0.24px;color:#4d4d4d;white-space:nowrap;">Основной склад</div>
<div style="position:absolute;left:814.20px;top:282.55px;height:16px;line-height:16px;font-size:11.44px;letter-spacing:-0.24px;color:#4d4d4d;white-space:nowrap;">Товары</div>
<div style="position:absolute;left:0.00px;top:302.44px;width:900.00px;height:23.17px;background:#ffffff;border-bottom:1px solid #e6e6e6;"></div>
<div style="position:absolute;left:271.70px;top:305.72px;height:16px;line-height:16px;font-size:11.44px;letter-spacing:-0.24px;color:#4d4d4d;white-space:nowrap;">Конфетпром ООО</div>
<div style="position:absolute;left:703.70px;top:305.72px;height:16px;line-height:16px;font-size:11.44px;letter-spacing:-0.24px;color:#4d4d4d;white-space:nowrap;">Основной склад</div>
<div style="position:absolute;left:814.20px;top:305.72px;height:16px;line-height:16px;font-size:11.44px;letter-spacing:-0.24px;color:#4d4d4d;white-space:nowrap;">Товары</div>
<div style="position:absolute;left:0.00px;top:325.61px;width:900.00px;height:23.17px;background:#f8f8f8;border-bottom:1px solid #e6e6e6;"></div>
<div style="position:absolute;left:271.70px;top:328.89px;height:16px;line-height:16px;font-size:11.44px;letter-spacing:-0.24px;color:#4d4d4d;white-space:nowrap;">ООО Paradise meals</div>
<div style="position:absolute;left:703.70px;top:328.89px;height:16px;line-height:16px;font-size:11.44px;letter-spacing:-0.24px;color:#4d4d4d;white-space:nowrap;">Основной склад</div>
<div style="position:absolute;left:814.20px;top:328.89px;height:16px;line-height:16px;font-size:11.44px;letter-spacing:-0.24px;color:#4d4d4d;white-space:nowrap;">Товары</div>
<div style="position:absolute;left:0.00px;top:348.78px;width:900.00px;height:23.17px;background:#ffffff;border-bottom:1px solid #e6e6e6;"></div>
<div style="position:absolute;left:271.70px;top:352.06px;height:16px;line-height:16px;font-size:11.44px;letter-spacing:-0.24px;color:#4d4d4d;white-space:nowrap;">Агроферма "Коровино"</div>
<div style="position:absolute;left:703.70px;top:352.06px;height:16px;line-height:16px;font-size:11.44px;letter-spacing:-0.24px;color:#4d4d4d;white-space:nowrap;">Основной склад</div>
<div style="position:absolute;left:814.20px;top:352.06px;height:16px;line-height:16px;font-size:11.44px;letter-spacing:-0.24px;color:#4d4d4d;white-space:nowrap;">Товары</div>
<div style="position:absolute;left:0.00px;top:371.95px;width:900.00px;height:23.17px;background:#f8f8f8;border-bottom:1px solid #e6e6e6;"></div>
<div style="position:absolute;left:271.70px;top:375.24px;height:16px;line-height:16px;font-size:11.44px;letter-spacing:-0.24px;color:#4d4d4d;white-space:nowrap;">ООО "Продукты"</div>
<div style="position:absolute;left:703.70px;top:375.24px;height:16px;line-height:16px;font-size:11.44px;letter-spacing:-0.24px;color:#4d4d4d;white-space:nowrap;">Основной склад</div>
<div style="position:absolute;left:814.20px;top:375.24px;height:16px;line-height:16px;font-size:11.44px;letter-spacing:-0.24px;color:#4d4d4d;white-space:nowrap;">Товары</div>
<div style="position:absolute;left:0.00px;top:395.12px;width:900.00px;height:23.17px;background:#ffffff;border-bottom:1px solid #e6e6e6;"></div>
<div style="position:absolute;left:271.70px;top:398.41px;height:16px;line-height:16px;font-size:11.44px;letter-spacing:-0.24px;color:#4d4d4d;white-space:nowrap;">ООО "Продукты"</div>
<div style="position:absolute;left:703.70px;top:398.41px;height:16px;line-height:16px;font-size:11.44px;letter-spacing:-0.24px;color:#4d4d4d;white-space:nowrap;">Основной склад</div>
<div style="position:absolute;left:814.20px;top:398.41px;height:16px;line-height:16px;font-size:11.44px;letter-spacing:-0.24px;color:#4d4d4d;white-space:nowrap;">Товары</div>
<div style="position:absolute;left:0.00px;top:418.29px;width:900.00px;height:23.17px;background:#f8f8f8;border-bottom:1px solid #e6e6e6;"></div>
<div style="position:absolute;left:271.70px;top:421.58px;height:16px;line-height:16px;font-size:11.44px;letter-spacing:-0.24px;color:#4d4d4d;white-space:nowrap;">Конфетпром ООО</div>
<div style="position:absolute;left:703.70px;top:421.58px;height:16px;line-height:16px;font-size:11.44px;letter-spacing:-0.24px;color:#4d4d4d;white-space:nowrap;">Основной склад</div>
<div style="position:absolute;left:814.20px;top:421.58px;height:16px;line-height:16px;font-size:11.44px;letter-spacing:-0.24px;color:#4d4d4d;white-space:nowrap;">Товары</div>
<div style="position:absolute;left:0.00px;top:441.46px;width:900.00px;height:23.17px;background:#ffffff;border-bottom:1px solid #e6e6e6;"></div>
<div style="position:absolute;left:271.70px;top:444.75px;height:16px;line-height:16px;font-size:11.44px;letter-spacing:-0.24px;color:#4d4d4d;white-space:nowrap;">Конфетпром ООО</div>
<div style="position:absolute;left:703.70px;top:444.75px;height:16px;line-height:16px;font-size:11.44px;letter-spacing:-0.24px;color:#4d4d4d;white-space:nowrap;">Основной склад</div>
<div style="position:absolute;left:814.20px;top:444.75px;height:16px;line-height:16px;font-size:11.44px;letter-spacing:-0.24px;color:#4d4d4d;white-space:nowrap;">Товары</div>
<div style="position:absolute;left:0.00px;top:464.63px;width:900.00px;height:23.17px;background:#f8f8f8;border-bottom:1px solid #e6e6e6;"></div>
<div style="position:absolute;left:271.70px;top:467.92px;height:16px;line-height:16px;font-size:11.44px;letter-spacing:-0.24px;color:#4d4d4d;white-space:nowrap;">Конфетпром ООО</div>
<div style="position:absolute;left:703.70px;top:467.92px;height:16px;line-height:16px;font-size:11.44px;letter-spacing:-0.24px;color:#4d4d4d;white-space:nowrap;">Основной склад</div>
<div style="position:absolute;left:814.20px;top:467.92px;height:16px;line-height:16px;font-size:11.44px;letter-spacing:-0.24px;color:#4d4d4d;white-space:nowrap;">Товары</div>
<div style="position:absolute;left:0.00px;top:474.30px;width:900.00px;height:20.00px;background:#fff;"></div>
<div style="position:absolute;left:2.00px;top:479.40px;width:780.00px;height:6.70px;background:#d6d6d6;border-radius:3px;"></div>
<div style="position:absolute;left:2.00px;top:479.40px;width:339.00px;height:6.70px;background:#9d9d9d;border-radius:3px;"></div>
<div style="position:absolute;left:783.40px;top:474.60px;width:39.30px;height:19.00px;background:linear-gradient(#fff,#ececec);border-left:1px solid #c8c8c8;border-top:1px solid #c8c8c8;"></div>
<div style="position:absolute;left:801.00px;top:474.70px;width:1.00px;height:18.00px;background:#c8c8c8;"></div>
<div style="position:absolute;left:782.70px;top:477.70px;width:16.00px;height:12.00px;"><svg width="16" height="12" viewBox="0 0 16 12" style="position:absolute;left:0;top:0"><path d="M3 4H12.5L7.75 8.8Z" fill="#333"/></svg></div>
<div style="position:absolute;left:802.70px;top:477.70px;width:18.00px;height:12.00px;"><svg width="18" height="12" viewBox="0 0 18 12" style="position:absolute;left:0;top:0"><path d="M4 4H13.2L8.6 8.5Z" fill="#333"/><path d="M5 9.2H12.5" stroke="#666" stroke-width="1"/></svg></div>
</div>
<div style="position:absolute;left:553.75px;top:212.2px;width:407.85px;height:553.8px;background:#fff;border-left:1px solid #bdbdbd;border-right:1px solid #bdbdbd;box-shadow:2px 2px 4px rgba(0,0,0,0.12);overflow:hidden;">
<div style="position:absolute;left:0.00px;top:0.50px;width:420.00px;height:25.75px;background:#f8ca1f;"></div>
<div style="position:absolute;left:10.95px;top:4.38px;width:18.00px;height:18.00px;"><svg width="18" height="18" viewBox="0 0 18 18" style="position:absolute;left:0;top:0"><circle cx="9" cy="9" r="6.3" fill="#3aaa4f"/><path d="M9 5.6V12.4M5.6 9H12.4" stroke="#fff" stroke-width="1.7"/></svg></div>
<div style="position:absolute;left:38.25px;top:5.38px;height:16px;line-height:16px;font-size:11.44px;letter-spacing:-0.24px;color:#4d4d4d;white-space:nowrap;">Поступление</div>
<div style="position:absolute;left:382.85px;top:4.38px;width:18.00px;height:18.00px;"><svg width="18" height="18" viewBox="0 0 18 18" style="position:absolute;left:0;top:0"><path d="M6.8 5.3 L11.2 8.7 L6.8 12.1Z" fill="#333"/></svg></div>
<div style="position:absolute;left:10.95px;top:30.12px;width:18.00px;height:18.00px;"><svg width="18" height="18" viewBox="0 0 18 18" style="position:absolute;left:0;top:0"><path d="M4.9 3.1 H11.3 L13.7 5.5 V14.4 H4.9Z" fill="#fff" stroke="#8896a6" stroke-width="1"/><path d="M11.3 3.1V5.5H13.7" fill="none" stroke="#8896a6" stroke-width="1"/><circle cx="6.6" cy="11.8" r="4.1" fill="#2eaa48"/><path d="M6.6 9.4V14.2M4.2 11.8H9" stroke="#fff" stroke-width="1.4"/></svg></div>
<div style="position:absolute;left:38.25px;top:31.12px;height:16px;line-height:16px;font-size:11.44px;letter-spacing:-0.24px;color:#4d4d4d;white-space:nowrap;">Скопировать</div>
<div style="position:absolute;left:145.25px;width:236.00px;top:31.12px;height:16px;line-height:16px;font-size:11.44px;letter-spacing:-0.24px;color:#a8a8a8;text-align:right;white-space:nowrap;">F9</div>
<div style="position:absolute;left:0.00px;top:53.50px;width:420.00px;height:1.00px;background:#e5e0d2;"></div>
<div style="position:absolute;left:10.95px;top:59.88px;width:18.00px;height:18.00px;"><svg width="18" height="18" viewBox="0 0 18 18" style="position:absolute;left:0;top:0"><path d="M3.5 15 L4.5 11.5 L12 4 L14.5 6.5 L7 14Z" fill="#4caf50"/><path d="M12 4 L13.3 2.7 L15.8 5.2 L14.5 6.5Z" fill="#455a64"/><path d="M3.5 15 L4.5 11.5 L7 14Z" fill="#e5b06a"/></svg></div>
<div style="position:absolute;left:38.25px;top:60.88px;height:16px;line-height:16px;font-size:11.44px;letter-spacing:-0.24px;color:#4d4d4d;white-space:nowrap;">Изменить</div>
<div style="position:absolute;left:145.25px;width:236.00px;top:60.88px;height:16px;line-height:16px;font-size:11.44px;letter-spacing:-0.24px;color:#a8a8a8;text-align:right;white-space:nowrap;">F2</div>
<div style="position:absolute;left:10.95px;top:85.62px;width:18.00px;height:18.00px;"><svg width="18" height="18" viewBox="0 0 18 18" style="position:absolute;left:0;top:0"><path d="M4.9 3.1 H11.3 L13.7 5.5 V14.4 H4.9Z" fill="#fff" stroke="#8896a6" stroke-width="1"/><path d="M11.3 3.1V5.5H13.7" fill="none" stroke="#8896a6" stroke-width="1"/><circle cx="6.6" cy="11.8" r="4.1" fill="#d9363e"/><path d="M5 10.2L8.2 13.4M8.2 10.2L5 13.4" stroke="#fff" stroke-width="1.3"/></svg></div>
<div style="position:absolute;left:38.25px;top:86.62px;height:16px;line-height:16px;font-size:11.44px;letter-spacing:-0.24px;color:#4d4d4d;white-space:nowrap;">Пометить на удаление / Снять пометку</div>
<div style="position:absolute;left:145.25px;width:236.00px;top:86.62px;height:16px;line-height:16px;font-size:11.44px;letter-spacing:-0.24px;color:#a8a8a8;text-align:right;white-space:nowrap;">Del</div>
<div style="position:absolute;left:10.95px;top:111.38px;width:18.00px;height:18.00px;"><svg width="18" height="18" viewBox="0 0 18 18" style="position:absolute;left:0;top:0"><path d="M13.3 6.5 A5.2 5.2 0 1 0 13.5 11" fill="none" stroke="#2ea84a" stroke-width="1.9"/><path d="M10.5 5.8 L15 3.2 L15 8.3Z" fill="#2ea84a"/></svg></div>
<div style="position:absolute;left:38.25px;top:112.38px;height:16px;line-height:16px;font-size:11.44px;letter-spacing:-0.24px;color:#4d4d4d;white-space:nowrap;">Обновить</div>
<div style="position:absolute;left:145.25px;width:236.00px;top:112.38px;height:16px;line-height:16px;font-size:11.44px;letter-spacing:-0.24px;color:#a8a8a8;text-align:right;white-space:nowrap;">F5</div>
<div style="position:absolute;left:0.00px;top:134.75px;width:420.00px;height:1.00px;background:#e5e0d2;"></div>
<div style="position:absolute;left:10.95px;top:141.12px;width:18.00px;height:18.00px;"><svg width="18" height="18" viewBox="0 0 18 18" style="position:absolute;left:0;top:0"><path d="M5 3.8 Q2.4 9 5 14.2 M13 3.8 Q15.6 9 13 14.2" fill="none" stroke="#2a5d8f" stroke-width="1.8"/><path d="M8.4 7 L6.6 9 L8.4 11Z M9.6 7 L11.4 9 L9.6 11Z" fill="#2a5d8f"/></svg></div>
<div style="position:absolute;left:38.25px;top:142.12px;height:16px;line-height:16px;font-size:11.44px;letter-spacing:-0.24px;color:#4d4d4d;white-space:nowrap;">Установить период...</div>
<div style="position:absolute;left:0.00px;top:164.50px;width:420.00px;height:1.00px;background:#e5e0d2;"></div>
<div style="position:absolute;left:10.95px;top:170.88px;width:18.00px;height:18.00px;"><svg width="18" height="18" viewBox="0 0 18 18" style="position:absolute;left:0;top:0"><path d="M2.6 2.2 H10.8 V13.4 H2.6Z" fill="#f1f4f8" stroke="#8c9cb0" stroke-width="0.9"/><path d="M4.2 4.6H9M4.2 6.6H9M4.2 8.6H9M4.2 10.6H8" fill="none" stroke="#a3b0bf" stroke-width="0.8"/><path d="M8.6 3.6 H11.6 Q13.3 3.6 13.3 5.3 V6.8" fill="none" stroke="#22b14c" stroke-width="2.6"/><path d="M10.2 6.4 H16.4 L13.3 10.2Z" fill="#22b14c"/><path d="M9.6 10.6 V14.6 Q12.3 16.2 15 14.6 V10.6Z" fill="#e2bd34"/><ellipse cx="12.3" cy="10.6" rx="2.7" ry="1.2" fill="#f6de70"/><path d="M9.6 12.6 Q12.3 14 15 12.6" fill="none" stroke="#c9a11e" stroke-width="0.6"/></svg></div>
<div style="position:absolute;left:38.25px;top:171.88px;height:16px;line-height:16px;font-size:11.44px;letter-spacing:-0.24px;color:#4d4d4d;white-space:nowrap;">Провести</div>
<div style="position:absolute;left:10.95px;top:196.62px;width:18.00px;height:18.00px;"><svg width="18" height="18" viewBox="0 0 18 18" style="position:absolute;left:0;top:0"><path d="M2.6 2.2 H10.8 V13.4 H2.6Z" fill="#f1f4f8" stroke="#8c9cb0" stroke-width="0.9"/><path d="M4.2 4.6H9M4.2 6.6H9M4.2 8.6H9M4.2 10.6H8" fill="none" stroke="#a3b0bf" stroke-width="0.8"/><path d="M10 9.5 V7 Q10 4.8 12.3 4.8 Q14.8 4.8 14.8 7.5 V9.5" fill="none" stroke="#e8453c" stroke-width="2.6"/><path d="M8 5.5 L11.2 2.2 L12.2 6.8Z" fill="#e8453c"/><path d="M9.6 10.6 V14.6 Q12.3 16.2 15 14.6 V10.6Z" fill="#e2bd34"/><ellipse cx="12.3" cy="10.6" rx="2.7" ry="1.2" fill="#f6de70"/><path d="M9.6 12.6 Q12.3 14 15 12.6" fill="none" stroke="#c9a11e" stroke-width="0.6"/></svg></div>
<div style="position:absolute;left:38.25px;top:197.62px;height:16px;line-height:16px;font-size:11.44px;letter-spacing:-0.24px;color:#4d4d4d;white-space:nowrap;">Отменить проведение</div>
<div style="position:absolute;left:0.00px;top:220.00px;width:420.00px;height:1.00px;background:#e5e0d2;"></div>
<div style="position:absolute;left:10.95px;top:226.38px;width:18.00px;height:18.00px;"><svg width="18" height="18" viewBox="0 0 18 18" style="position:absolute;left:0;top:0"><path d="M3 4.5 H11 V15 H3Z" fill="#4f86bd" stroke="#2f5f8f" stroke-width="0.8"/><path d="M3.5 7.2H10.5M3.5 9.7H10.5M3.5 12.2H10.5" stroke="#a9c8e6" stroke-width="0.9"/><path d="M6 3 H16.5 L12.6 7.5 V13.5 L10.2 12.3 V7.5Z" fill="#e9ecef" stroke="#8a96a3" stroke-width="0.8"/></svg></div>
<div style="position:absolute;left:38.25px;top:227.38px;height:16px;line-height:16px;font-size:11.44px;letter-spacing:-0.24px;color:#4d4d4d;white-space:nowrap;">Настроить список...</div>
<div style="position:absolute;left:10.95px;top:252.12px;width:18.00px;height:18.00px;"><svg width="18" height="18" viewBox="0 0 18 18" style="position:absolute;left:0;top:0"><path d="M2.3 5 H6.5 L7.8 6.3 H14.3 V14.5 H2.3Z" fill="#f3c34a" stroke="#d39b22" stroke-width="0.8"/><g transform="translate(11.3 12)"><circle r="3.6" fill="#fff" stroke="#7b7b7b" stroke-width="1.2" stroke-dasharray="1.3 0.9"/><circle r="1.3" fill="none" stroke="#555" stroke-width="0.9"/></g></svg></div>
<div style="position:absolute;left:38.25px;top:253.12px;height:16px;line-height:16px;font-size:11.44px;letter-spacing:-0.24px;color:#4d4d4d;white-space:nowrap;">Выбрать настройки...</div>
<div style="position:absolute;left:10.95px;top:277.88px;width:18.00px;height:18.00px;"><svg width="18" height="18" viewBox="0 0 18 18" style="position:absolute;left:0;top:0"><path d="M2.5 3 H13.5 V15 H2.5Z" fill="#5b8fc7" stroke="#2f5f8f" stroke-width="0.8"/><path d="M4.5 3.5 H11 V7.5 H4.5Z" fill="#e8f0f8"/><g transform="translate(11.3 12)"><circle r="3.6" fill="#fff" stroke="#7b7b7b" stroke-width="1.2" stroke-dasharray="1.3 0.9"/><circle r="1.3" fill="none" stroke="#555" stroke-width="0.9"/></g></svg></div>
<div style="position:absolute;left:38.25px;top:278.88px;height:16px;line-height:16px;font-size:11.44px;letter-spacing:-0.24px;color:#4d4d4d;white-space:nowrap;">Сохранить настройки...</div>
<div style="position:absolute;left:38.25px;top:304.63px;height:16px;line-height:16px;font-size:11.44px;letter-spacing:-0.24px;color:#4d4d4d;white-space:nowrap;">Установить стандартные настройки</div>
<div style="position:absolute;left:0.00px;top:327.00px;width:420.00px;height:1.00px;background:#e5e0d2;"></div>
<div style="position:absolute;left:10.95px;top:333.38px;width:18.00px;height:18.00px;"><svg width="18" height="18" viewBox="0 0 18 18" style="position:absolute;left:0;top:0"><path d="M2.5 3.5 H12.3 V15 H2.5Z" fill="#5b8fc7" stroke="#2f5f8f" stroke-width="0.8"/><path d="M3.5 6.5H8M3.5 8.8H7M3.5 11.2H8M3.5 13.5H11" stroke="#a9c8e6" stroke-width="1"/><path d="M8 2 H13 L14.5 3.5 V6.5 H8Z" fill="#fff" stroke="#8a96a3" stroke-width="0.8"/><path d="M6.8 7.2 H17 V11.8 H6.8Z" fill="#3f6f9f"/><path d="M8.5 10 H15.5 V13 H8.5Z" fill="#e6ebf0" stroke="#6b7f93" stroke-width="0.6"/></svg></div>
<div style="position:absolute;left:38.25px;top:334.38px;height:16px;line-height:16px;font-size:11.44px;letter-spacing:-0.24px;color:#4d4d4d;white-space:nowrap;">Вывести список...</div>
<div style="position:absolute;left:0.00px;top:356.75px;width:420.00px;height:1.00px;background:#e5e0d2;"></div>
<div style="position:absolute;left:38.25px;top:364.13px;height:16px;line-height:16px;font-size:11.44px;letter-spacing:-0.24px;color:#4d4d4d;white-space:nowrap;">Найти: Организация - Торговый дом "Компле...</div>
<div style="position:absolute;left:145.25px;width:236.00px;top:364.13px;height:16px;line-height:16px;font-size:11.44px;letter-spacing:-0.24px;color:#a8a8a8;text-align:right;white-space:nowrap;">Ctrl+Alt+F</div>
<div style="position:absolute;left:10.95px;top:388.88px;width:18.00px;height:18.00px;"><svg width="18" height="18" viewBox="0 0 18 18" style="position:absolute;left:0;top:0"><circle cx="8.4" cy="6.7" r="3.9" fill="none" stroke="#1f6aa8" stroke-width="1.7"/><path d="M11.3 9.7 L14.6 13" stroke="#1f6aa8" stroke-width="2.1" stroke-linecap="round"/><path d="M2.3 13.4H3.7M4.9 13.4H6.3M7.5 13.4H8.9" stroke="#1f6aa8" stroke-width="1.3"/></svg></div>
<div style="position:absolute;left:38.25px;top:389.88px;height:16px;line-height:16px;font-size:11.44px;letter-spacing:-0.24px;color:#4d4d4d;white-space:nowrap;">Расширенный поиск</div>
<div style="position:absolute;left:145.25px;width:236.00px;top:389.88px;height:16px;line-height:16px;font-size:11.44px;letter-spacing:-0.24px;color:#a8a8a8;text-align:right;white-space:nowrap;">Alt+F</div>
<div style="position:absolute;left:10.95px;top:414.63px;width:18.00px;height:18.00px;"><svg width="18" height="18" viewBox="0 0 18 18" style="position:absolute;left:0;top:0"><circle cx="8.4" cy="6.9" r="3.9" fill="#e9ecef" stroke="#a7b3bf" stroke-width="1.6"/><path d="M11.3 9.9 L14.6 13.4" stroke="#a7b3bf" stroke-width="2" stroke-linecap="round"/><path d="M3.2 10.3 L7.4 14.5 M7.4 10.3 L3.2 14.5" stroke="#b88484" stroke-width="1.7"/></svg></div>
<div style="position:absolute;left:38.25px;top:415.63px;height:16px;line-height:16px;font-size:11.44px;letter-spacing:-0.24px;color:#aaaaaa;white-space:nowrap;">Отменить поиск</div>
<div style="position:absolute;left:145.25px;width:236.00px;top:415.63px;height:16px;line-height:16px;font-size:11.44px;letter-spacing:-0.24px;color:#a8a8a8;text-align:right;white-space:nowrap;">Ctrl+Q</div>
<div style="position:absolute;left:0.00px;top:438.00px;width:420.00px;height:1.00px;background:#e5e0d2;"></div>
<div style="position:absolute;left:10.95px;top:444.38px;width:18.00px;height:18.00px;"><svg width="18" height="18" viewBox="0 0 18 18" style="position:absolute;left:0;top:0"><text x="2.2" y="8.1" font-size="10" font-weight="bold" font-family="Liberation Sans" fill="#1f9a45" textLength="9.3" lengthAdjust="spacingAndGlyphs">дт</text><text x="6.8" y="14.6" font-size="10" font-weight="bold" font-family="Liberation Sans" fill="#e04545" textLength="9" lengthAdjust="spacingAndGlyphs">кт</text></svg></div>
<div style="position:absolute;left:38.25px;top:445.38px;height:16px;line-height:16px;font-size:11.44px;letter-spacing:-0.24px;color:#4d4d4d;white-space:nowrap;">Движения документа</div>
<div style="position:absolute;left:10.95px;top:470.13px;width:18.00px;height:18.00px;"><svg width="18" height="18" viewBox="0 0 18 18" style="position:absolute;left:0;top:0"><path d="M5.8 3.2 H12.2 V6.6 H5.8Z" fill="#fff" stroke="#5c7590" stroke-width="1"/><path d="M3 7.6 Q3 6.6 4 6.6 H14 Q15 6.6 15 7.6 V12.6 H13.2 V10.8 H4.8 V12.6 H3Z" fill="#3d5f85"/><path d="M5.2 10.8 H12.8 V14.8 H5.2Z" fill="#fff" stroke="#5c7590" stroke-width="1"/></svg></div>
<div style="position:absolute;left:38.25px;top:471.13px;height:16px;line-height:16px;font-size:11.44px;letter-spacing:-0.24px;color:#4d4d4d;white-space:nowrap;">Печать</div>
<div style="position:absolute;left:382.85px;top:470.13px;width:18.00px;height:18.00px;"><svg width="18" height="18" viewBox="0 0 18 18" style="position:absolute;left:0;top:0"><path d="M6.8 5.3 L11.2 8.7 L6.8 12.1Z" fill="#333"/></svg></div>
<div style="position:absolute;left:38.25px;top:496.88px;height:16px;line-height:16px;font-size:11.44px;letter-spacing:-0.24px;color:#4d4d4d;white-space:nowrap;">Загрузить</div>
<div style="position:absolute;left:382.85px;top:495.88px;width:18.00px;height:18.00px;"><svg width="18" height="18" viewBox="0 0 18 18" style="position:absolute;left:0;top:0"><path d="M6.8 5.3 L11.2 8.7 L6.8 12.1Z" fill="#333"/></svg></div>
<div style="position:absolute;left:0.00px;top:519.25px;width:420.00px;height:1.00px;background:#e5e0d2;"></div>
<div style="position:absolute;left:38.25px;top:526.62px;height:16px;line-height:16px;font-size:11.44px;letter-spacing:-0.24px;color:#4d4d4d;white-space:nowrap;">Создать на основании</div>
<div style="position:absolute;left:382.85px;top:525.62px;width:18.00px;height:18.00px;"><svg width="18" height="18" viewBox="0 0 18 18" style="position:absolute;left:0;top:0"><path d="M6.8 5.3 L11.2 8.7 L6.8 12.1Z" fill="#333"/></svg></div>
<div style="position:absolute;left:0.00px;top:547.40px;width:420.00px;height:1.00px;background:#ececec;"></div>
<div style="position:absolute;left:193.95px;top:547.30px;width:18.00px;height:8.00px;"><svg width="18" height="8" viewBox="0 0 18 8" style="position:absolute;left:0;top:0"><path d="M6 3 H12 L9 6Z" fill="#222"/></svg></div>
</div>
<div style="position:absolute;left:93.2px;top:366.5px;width:395px;height:350px;background:#fff;"></div>
<div style="position:absolute;left:100.2px;top:373.6px;width:381.4px;height:335px;background:#fff;border:1px solid #b9b9b9;box-shadow:0 0 6px rgba(0,0,0,0.2);"></div>
<div style="position:absolute;left:112.6px;top:381.7px;height:21px;line-height:21px;font-size:16.5px;color:#222;white-space:nowrap;">Вывести список</div>
<svg style="position:absolute;left:405px;top:384px;" width="9" height="16" viewBox="0 0 9 16"><circle cx="4.5" cy="3.5" r="1.2" fill="#555"/><circle cx="4.5" cy="7.7" r="1.2" fill="#555"/><circle cx="4.5" cy="11.9" r="1.2" fill="#555"/></svg>
<svg style="position:absolute;left:428px;top:384px;" width="16" height="16" viewBox="0 0 16 16"><rect x="4.5" y="4.5" width="8" height="7.5" fill="none" stroke="#444" stroke-width="1.2"/></svg>
<svg style="position:absolute;left:455px;top:384px;" width="16" height="16" viewBox="0 0 16 16"><path d="M3.8 3.7 L12.5 12.3 M12.5 3.7 L3.8 12.3" stroke="#444" stroke-width="1.2"/></svg>
<div style="position:absolute;left:112.6px;top:415.0px;height:14px;line-height:14px;font-size:11.44px;letter-spacing:-0.24px;color:#555;white-space:nowrap;">Выводить в:</div>
<div class="inp" style="left:180px;top:411.4px;width:282.6px;height:19.2px;"></div>
<div style="position:absolute;left:444.6px;top:412.4px;width:1px;height:17.2px;background:#d4d4d4;"></div>
<svg style="position:absolute;left:449px;top:417px;" width="10" height="8" viewBox="0 0 10 8"><path d="M2.5 3 L7.5 3 L5 5.5Z" fill="#444"/></svg>
<svg style="position:absolute;left:182px;top:413px;" width="16" height="16" viewBox="0 0 16 16"><path d="M4 2.5 H12 L14.5 5 V14.5 H4Z" fill="#e9eef4" stroke="#9aa8b8" stroke-width="0.8"/><path d="M8 6.5H14M8 9H14M8 11.5H14M10 5V14.5" stroke="#9aa8b8" stroke-width="0.7"/><text x="1" y="13.5" font-size="10" font-weight="bold" font-family="Liberation Serif" fill="#2a5d8f">A</text></svg>
<div style="position:absolute;left:200.5px;top:414.5px;height:14px;line-height:14px;font-size:11.44px;letter-spacing:-0.24px;color:#333;white-space:nowrap;">Табличный документ</div>
<div style="position:absolute;left:112.6px;top:444.0px;height:14px;line-height:14px;font-size:11.44px;letter-spacing:-0.24px;color:#555;white-space:nowrap;">Выводить колонки:</div>
<div class="btn" style="left:402.5px;top:439.3px;width:26px;height:22px;"></div>
<svg style="position:absolute;left:406px;top:442px;" width="18" height="17" viewBox="0 0 18 17"><path d="M4.5 5.5 L7 3 H14.5 V11 L12 13.5 H4.5Z" fill="#7fa3c8"/><path d="M4.5 5.5 H12 V13.5 H4.5Z" fill="#dfe9f3" stroke="#5c85b0" stroke-width="0.8"/><path d="M5.3 8.8 L7.8 11.3 L13.5 5.3" fill="none" stroke="#1fa13f" stroke-width="2"/></svg>
<div class="btn" style="left:436.6px;top:439.3px;width:26px;height:22px;"></div>
<svg style="position:absolute;left:440px;top:442px;" width="18" height="17" viewBox="0 0 18 17"><path d="M4.5 5.5 L7 3 H14.5 V11 L12 13.5 H4.5Z" fill="#9bb5cf"/><path d="M4.5 5.5 H12 V13.5 H4.5Z" fill="#f4f7fa" stroke="#6b8fb5" stroke-width="0.8"/></svg>
<div style="position:absolute;left:112.3px;top:470.2px;width:350.2px;height:159.2px;border:1px solid #bdbdbd;background:#fff;overflow:hidden;"></div>
<div class="cb" style="left:120px;top:476.0px;width:13.5px;height:13.5px;"></div>
<svg style="position:absolute;left:120.5px;top:473.5px;" width="14" height="14" viewBox="0 0 14 14"><path d="M1.8 7.9 L5.7 11.8 L12.7 2.4" fill="none" stroke="#129c43" stroke-width="2.3"/></svg>
<div style="position:absolute;left:140.4px;top:476.0px;height:14px;line-height:14px;font-size:11.44px;letter-spacing:-0.24px;color:#4d4d4d;white-space:nowrap;">Вид операции</div>
<div class="cb" style="left:120px;top:499.0px;width:13.5px;height:13.5px;"></div>
<svg style="position:absolute;left:120.5px;top:496.5px;" width="14" height="14" viewBox="0 0 14 14"><path d="M1.8 7.9 L5.7 11.8 L12.7 2.4" fill="none" stroke="#129c43" stroke-width="2.3"/></svg>
<div style="position:absolute;left:140.4px;top:499.0px;height:14px;line-height:14px;font-size:11.44px;letter-spacing:-0.24px;color:#4d4d4d;white-space:nowrap;">Организация</div>
<div class="cb" style="left:120px;top:522.0px;width:13.5px;height:13.5px;"></div>
<svg style="position:absolute;left:120.5px;top:519.5px;" width="14" height="14" viewBox="0 0 14 14"><path d="M1.8 7.9 L5.7 11.8 L12.7 2.4" fill="none" stroke="#129c43" stroke-width="2.3"/></svg>
<div style="position:absolute;left:140.4px;top:522.0px;height:14px;line-height:14px;font-size:11.44px;letter-spacing:-0.24px;color:#4d4d4d;white-space:nowrap;">Дата вх.</div>
<div class="cb" style="left:120px;top:545.0px;width:13.5px;height:13.5px;"></div>
<svg style="position:absolute;left:120.5px;top:542.5px;" width="14" height="14" viewBox="0 0 14 14"><path d="M1.8 7.9 L5.7 11.8 L12.7 2.4" fill="none" stroke="#129c43" stroke-width="2.3"/></svg>
<div style="position:absolute;left:140.4px;top:545.0px;height:14px;line-height:14px;font-size:11.44px;letter-spacing:-0.24px;color:#4d4d4d;white-space:nowrap;">Номер вх.</div>
<div style="position:absolute;left:113.3px;top:564.0px;width:337px;height:22px;background:#fde49b;border:2px solid #f3c114;"></div>
<div class="cb" style="left:120px;top:568.0px;width:13.5px;height:13.5px;"></div>
<svg style="position:absolute;left:120.5px;top:565.5px;" width="14" height="14" viewBox="0 0 14 14"><path d="M1.8 7.9 L5.7 11.8 L12.7 2.4" fill="none" stroke="#129c43" stroke-width="2.3"/></svg>
<div style="position:absolute;left:140.4px;top:568.0px;height:14px;line-height:14px;font-size:11.44px;letter-spacing:-0.24px;color:#4d4d4d;white-space:nowrap;">Оригинал</div>
<div class="cb" style="left:120px;top:591.0px;width:13.5px;height:13.5px;"></div>
<div style="position:absolute;left:140.4px;top:591.0px;height:14px;line-height:14px;font-size:11.44px;letter-spacing:-0.24px;color:#4d4d4d;white-space:nowrap;">СФ оригинал</div>
<div style="position:absolute;left:113px;top:610.0px;width:336px;height:18.399999999999977px;overflow:hidden;">
<div class="cb" style="left:7px;top:4.5px;width:13.5px;height:13px;"></div>
<div style="position:absolute;left:27.400000000000006px;top:2px;height:18px;line-height:18px;font-size:11.44px;letter-spacing:-0.24px;color:#4d4d4d;white-space:nowrap;">Комментарий</div>
</div>
<div style="position:absolute;left:452.6px;top:491px;width:7.2px;height:117.4px;background:#dedede;border-radius:3.6px;"></div>
<div style="position:absolute;left:452.6px;top:549.7px;width:7.2px;height:36.8px;background:#9f9f9f;border-radius:3.6px;"></div>
<svg style="position:absolute;left:452px;top:476px;" width="8" height="8" viewBox="0 0 8 8"><path d="M2 5.5 L4 2.5 L6 5.5Z" fill="#444"/></svg>
<svg style="position:absolute;left:452px;top:615px;" width="8" height="8" viewBox="0 0 8 8"><path d="M2 2.5 L4 5.5 L6 2.5Z" fill="#444"/></svg>
<div class="cb" style="left:112.1px;top:645.3px;width:13.6px;height:13.1px;"></div>
<div style="position:absolute;left:131px;top:644.8px;height:14px;line-height:14px;font-size:11.44px;letter-spacing:-0.24px;color:#585858;white-space:nowrap;">Только выделенные</div>
<div style="position:absolute;left:318.6px;top:673.6px;width:39.1px;height:23.4px;box-sizing:border-box;border:1px solid #d2ad00;border-radius:2px;background:linear-gradient(#ffe23a,#f4cf00);"></div>
<div style="position:absolute;left:331px;top:678.0px;height:15px;line-height:15px;font-size:11.96px;letter-spacing:-0.25px;color:#333;white-space:nowrap;font-weight:bold;">OK</div>
<div class="btn" style="left:365.2px;top:673.6px;width:63.6px;height:23.4px;"></div>
<div style="position:absolute;left:376.5px;top:678.5px;height:14px;line-height:14px;font-size:11.44px;letter-spacing:-0.24px;color:#4d4d4d;white-space:nowrap;">Отмена</div>
<div class="btn" style="left:436.3px;top:673.6px;width:26.1px;height:23.4px;"></div>
<div style="position:absolute;left:445.5px;top:677.5px;height:16px;line-height:16px;font-size:12px;color:#333;white-space:nowrap;font-weight:bold;">?</div>
<svg style="position:absolute;left:0;top:0" width="1024" height="766" viewBox="0 0 1024 766">
<rect x="911.3" y="123.5" width="58.6" height="28.8" rx="4" ry="4" fill="none" stroke="#e23c36" stroke-width="3"/>
<rect x="556" y="540.2" width="186.7" height="28.5" rx="3.5" ry="3.5" fill="none" stroke="#e23c36" stroke-width="3"/>
<path d="M928.6 154.4 L747.8 525" stroke="#e23c36" stroke-width="3"/>
<path d="M741 538.6 L740.2 517.6 L747.8 525.4 L756.6 526.6Z" fill="#e23c36"/>
<path d="M554.5 553.6 L434 553.6" stroke="#e23c36" stroke-width="2.6"/>
<path d="M418.9 553.5 L438.1 544.3 L434.8 553.5 L437.9 563Z" fill="#e23c36"/>
</svg>
</body></html>
